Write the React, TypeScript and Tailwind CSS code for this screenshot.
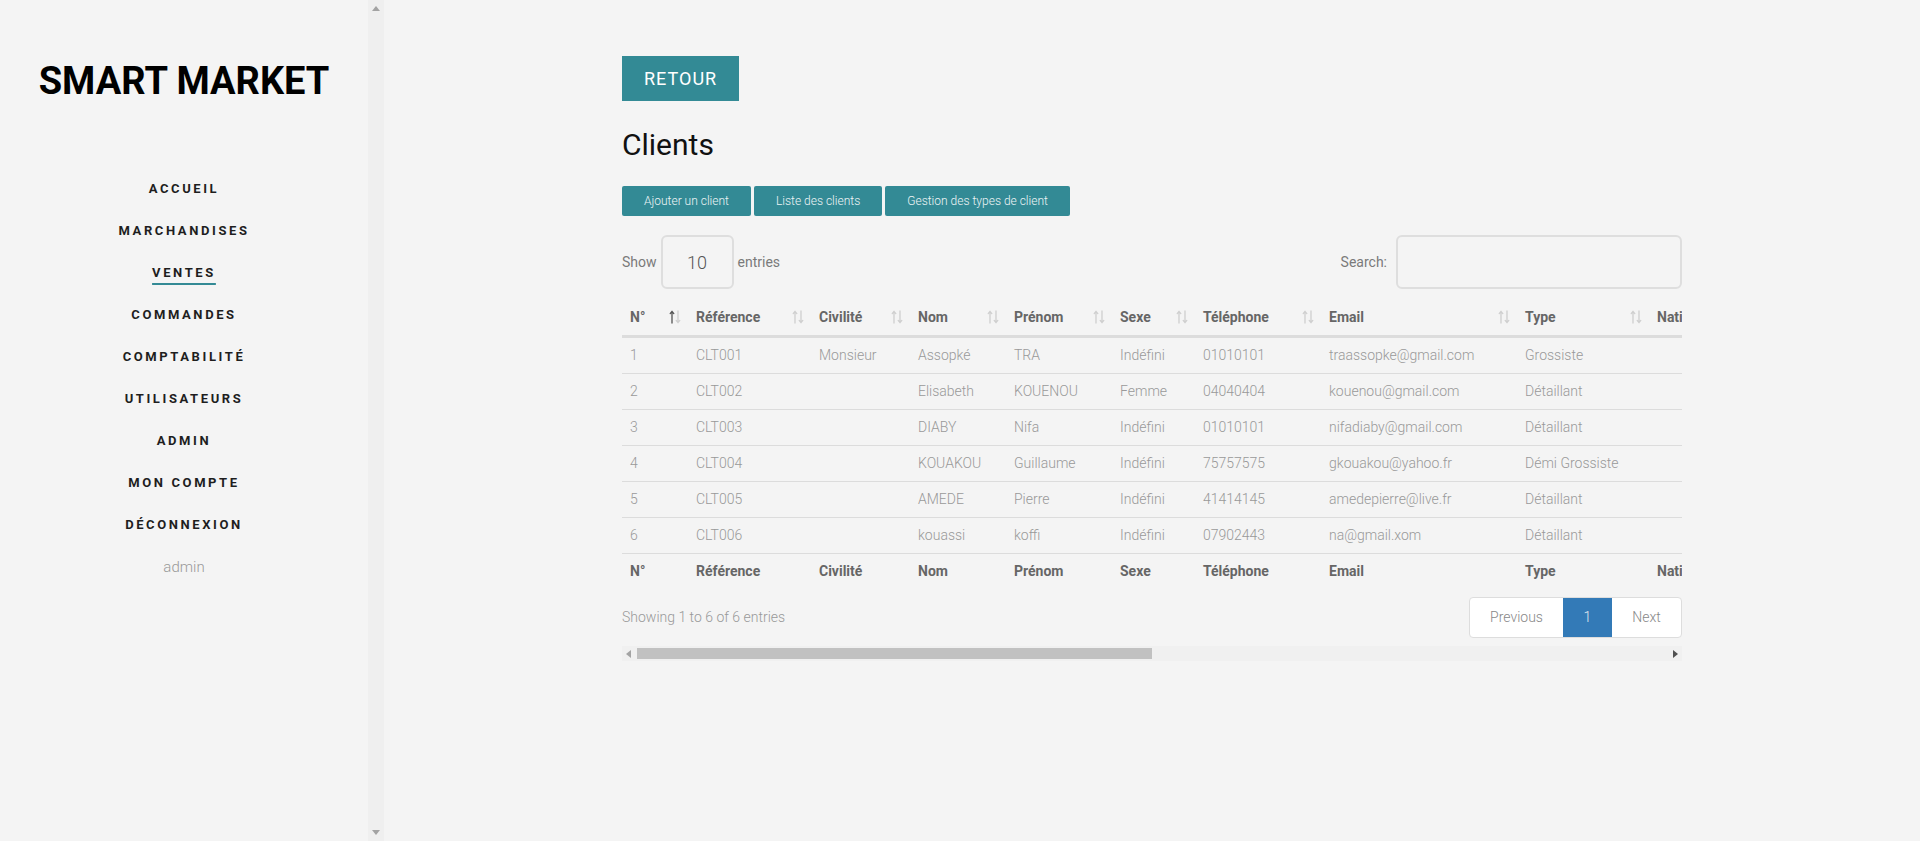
import React from 'react';

const navItems = ['ACCUEIL', 'MARCHANDISES', 'VENTES', 'COMMANDES', 'COMPTABILITÉ', 'UTILISATEURS', 'ADMIN', 'MON COMPTE', 'DÉCONNEXION'];

const columns = [
  { label: 'N°', w: 'w-[66px]' },
  { label: 'Référence', w: 'w-[123px]' },
  { label: 'Civilité', w: 'w-[99px]' },
  { label: 'Nom', w: 'w-[96px]' },
  { label: 'Prénom', w: 'w-[106px]' },
  { label: 'Sexe', w: 'w-[83px]' },
  { label: 'Téléphone', w: 'w-[126px]' },
  { label: 'Email', w: 'w-[196px]' },
  { label: 'Type', w: 'w-[132px]' },
  { label: 'Nationalité', w: 'w-[140px]' },
  { label: 'Adresse', w: 'w-[200px]' },
  { label: 'Ville', w: 'w-[120px]' },
  { label: "Date d'ajout", w: 'w-[150px]' },
  { label: 'Solde', w: 'w-[110px]' },
  { label: 'Actions', w: 'w-[320px]' },
];

const clients = [
  ['1', 'CLT001', 'Monsieur', 'Assopké', 'TRA', 'Indéfini', '01010101', 'traassopke@gmail.com', 'Grossiste', '', 'Abidjan', 'Abidjan', '12/03/2019', '0', ''],
  ['2', 'CLT002', '', 'Elisabeth', 'KOUENOU', 'Femme', '04040404', 'kouenou@gmail.com', 'Détaillant', '', 'Cocody', 'Abidjan', '12/03/2019', '0', ''],
  ['3', 'CLT003', '', 'DIABY', 'Nifa', 'Indéfini', '01010101', 'nifadiaby@gmail.com', 'Détaillant', '', 'Yopougon', 'Abidjan', '14/03/2019', '0', ''],
  ['4', 'CLT004', '', 'KOUAKOU', 'Guillaume', 'Indéfini', '75757575', 'gkouakou@yahoo.fr', 'Démi Grossiste', '', 'Bouaké', 'Bouaké', '15/03/2019', '0', ''],
  ['5', 'CLT005', '', 'AMEDE', 'Pierre', 'Indéfini', '41414145', 'amedepierre@live.fr', 'Détaillant', '', 'Plateau', 'Abidjan', '18/03/2019', '0', ''],
  ['6', 'CLT006', '', 'kouassi', 'koffi', 'Indéfini', '07902443', 'na@gmail.xom', 'Détaillant', '', 'Marcory', 'Abidjan', '20/03/2019', '0', ''],
];

function SortIcon({ active }: { active?: boolean }) {
  return (
    <svg width="12" height="14" viewBox="0 0 12 14" className="absolute right-[7px] top-[11px]">
      <g fill="none" strokeWidth="1.3" strokeLinecap="round" strokeLinejoin="round">
        <path d="M3 13V1.5M1.2 3.6L3 1.3 4.8 3.6" stroke={active ? '#555' : '#cfcfcf'} />
        <path d="M9 1v11.5M7.2 10.4L9 12.7l1.8-2.3" stroke="#cfcfcf" />
      </g>
    </svg>
  );
}

export default function App() {
  return (
    <div className="flex h-[841px] w-full overflow-hidden bg-[#f4f4f4] font-['Roboto','Liberation_Sans',sans-serif]">
      {/* Sidebar */}
      <aside className="flex h-full w-[384px] shrink-0">
        <div className="flex w-[368px] flex-col items-center pt-[57px]">
          <h1 className="text-[38px] font-bold leading-[48px] text-black">SMART MARKET</h1>
          <nav className="mt-[63px] flex flex-col items-center">
            {navItems.map((item) => (
              <a
                key={item}
                className={`h-[42px] text-[13px] font-bold leading-[42px] tracking-[0.2em] text-[#1e1e1e] ${
                  item === 'VENTES' ? 'underline decoration-[#338a95] decoration-2 underline-offset-[6px]' : ''
                }`}
              >
                {item}
              </a>
            ))}
            <span className="h-[42px] text-[15px] font-light leading-[42px] text-[#999]">admin</span>
          </nav>
        </div>
        {/* vertical scrollbar */}
        <div className="flex h-full w-[16px] flex-col items-center justify-between bg-[#efefef] py-[6px]">
          <svg width="8" height="5" viewBox="0 0 8 5"><path d="M0 5L4 0l4 5z" fill="#a3a3a3" /></svg>
          <svg width="8" height="5" viewBox="0 0 8 5"><path d="M0 0l4 5 4-5z" fill="#a3a3a3" /></svg>
        </div>
      </aside>

      {/* Main */}
      <main className="flex flex-1 justify-center pt-[56px]">
        <div className="w-[1060px]">
          <button className="h-[45px] bg-[#338a95] px-[22px] text-[18px] tracking-[1px] text-white">RETOUR</button>
          <h2 className="mt-[26px] text-[30px] leading-[36px] text-[#111]">Clients</h2>
          <div className="mt-[23px] flex gap-[3px]">
            {['Ajouter un client', 'Liste des clients', 'Gestion des types de client'].map((b) => (
              <button key={b} className="h-[30px] rounded-[2px] bg-[#338a95] px-[22px] text-[12px] font-light text-[#eef5f5]">
                {b}
              </button>
            ))}
          </div>

          <div className="mt-[19px] flex h-[54px] items-center justify-between text-[14px] text-[#7a7a7a]">
            <div className="flex items-center">
              <span>Show</span>
              <div className="mx-[4px] flex h-[54px] w-[73px] items-center justify-center rounded-[6px] border-2 border-[#dedede] text-[18px] font-light text-[#555]">
                10
              </div>
              <span>entries</span>
            </div>
            <div className="flex items-center">
              <span className="mr-[9px]">Search:</span>
              <div className="h-[54px] w-[286px] rounded-[6px] border-2 border-[#dedede]" />
            </div>
          </div>

          <div className="mt-[10px] overflow-hidden">
            <table className="w-[2067px] table-fixed border-separate border-spacing-0 text-left text-[14px]">
              <colgroup>
                {columns.map((c) => (
                  <col key={c.label} className={c.w} />
                ))}
              </colgroup>
              <thead>
                <tr>
                  {columns.map((c, i) => (
                    <th key={c.label} className="relative h-[39px] whitespace-nowrap border-b-[3px] border-[#dcdcdc] px-[8px] align-middle font-bold text-[#666]">
                      {c.label}
                      <SortIcon active={i === 0} />
                    </th>
                  ))}
                </tr>
              </thead>
              <tbody>
                {clients.map((row, r) => (
                  <tr key={r}>
                    {row.map((cell, i) => (
                      <td
                        key={i}
                        className={`whitespace-nowrap px-[8px] align-middle font-light text-[#999] ${
                          r === 0 ? 'h-[35px]' : 'h-[36px] border-t border-[#dcdcdc]'
                        }`}
                      >
                        {cell}
                      </td>
                    ))}
                  </tr>
                ))}
              </tbody>
              <tfoot>
                <tr>
                  {columns.map((c) => (
                    <th key={c.label} className="h-[36px] whitespace-nowrap border-t border-[#dcdcdc] px-[8px] align-middle font-bold text-[#666]">
                      {c.label}
                    </th>
                  ))}
                </tr>
              </tfoot>
            </table>
          </div>

          <div className="mt-[8px] flex h-[41px] items-center justify-between">
            <span className="text-[14px] font-light text-[#999]">Showing 1 to 6 of 6 entries</span>
            <div className="flex h-[41px] overflow-hidden rounded-[4px] border border-[#dddddd] bg-white text-[14px] font-light">
              <span className="flex w-[93px] items-center justify-center text-[#888]">Previous</span>
              <span className="flex w-[49px] items-center justify-center bg-[#337ab7] text-[#e0e8f0]">1</span>
              <span className="flex w-[69px] items-center justify-center text-[#888]">Next</span>
            </div>
          </div>

          {/* horizontal scrollbar */}
          <div className="mt-[8px] flex h-[15px] items-center bg-[#f0f0f0] px-[4px]">
            <svg width="5" height="8" viewBox="0 0 5 8"><path d="M5 0L0 4l5 4z" fill="#a3a3a3" /></svg>
            <div className="ml-[6px] h-[11px] w-[515px] bg-[#c1c1c1]" />
            <div className="flex-1" />
            <svg width="5" height="8" viewBox="0 0 5 8"><path d="M0 0l5 4-5 4z" fill="#505050" /></svg>
          </div>
        </div>
      </main>
    </div>
  );
}
